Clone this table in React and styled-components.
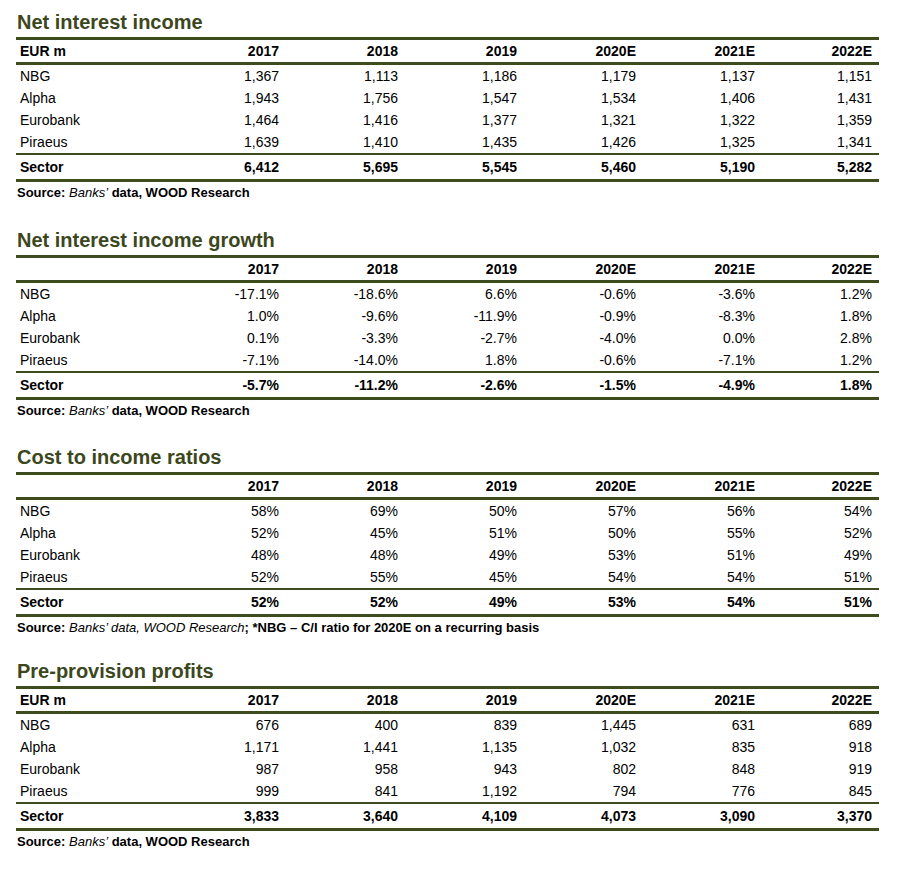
import React from "react";
import styled, { createGlobalStyle } from "styled-components";

const GlobalStyle = createGlobalStyle`
  body {
    margin: 0;
    background: #ffffff;
    font-family: "Liberation Sans", Arial, sans-serif;
    color: #000000;
  }
`;

const Page = styled.div`
  padding: 11px 21px 0 16px;
  width: 900px;
  box-sizing: border-box;
`;

const Section = styled.section`
  margin-top: ${(p) => p.$gap || 0}px;
`;

const Title = styled.h2`
  font-size: 20px;
  line-height: 22px;
  font-weight: 700;
  color: #3c4720;
  margin: 0 0 4px 1px;
`;

const Table = styled.div`
  width: 863px;
  font-size: 14px;
  border-top: 3px solid #3e4b1c;
  border-bottom: 3px solid #3e4b1c;
`;

const Row = styled.div`
  display: grid;
  grid-template-columns: 151px repeat(5, 119px) 117px;
  align-items: center;
  height: ${(p) => p.$h}px;
  font-weight: ${(p) => (p.$bold ? 700 : 400)};
  border-bottom: ${(p) => (p.$head ? "3px solid #3e4b1c" : "none")};
  border-top: ${(p) => (p.$total ? "2px solid #3e4b1c" : "none")};
`;

const Label = styled.div`
  padding-left: 4px;
  white-space: nowrap;
`;

const Cell = styled.div`
  padding-right: 7px;
  text-align: right;
  white-space: nowrap;
`;

const Source = styled.p`
  margin: 3px 0 0 1px;
  font-size: 13px;
  line-height: 16px;
  font-weight: 700;

  em {
    font-weight: 400;
  }
`;

const years = ["2017", "2018", "2019", "2020E", "2021E", "2022E"];

const tables = [
  {
    title: "Net interest income",
    unit: "EUR m",
    gap: 0,
    rows: [
      ["NBG", "1,367", "1,113", "1,186", "1,179", "1,137", "1,151"],
      ["Alpha", "1,943", "1,756", "1,547", "1,534", "1,406", "1,431"],
      ["Eurobank", "1,464", "1,416", "1,377", "1,321", "1,322", "1,359"],
      ["Piraeus", "1,639", "1,410", "1,435", "1,426", "1,325", "1,341"],
    ],
    total: ["Sector", "6,412", "5,695", "5,545", "5,460", "5,190", "5,282"],
  },
  {
    title: "Net interest income growth",
    unit: "",
    gap: 28,
    rows: [
      ["NBG", "-17.1%", "-18.6%", "6.6%", "-0.6%", "-3.6%", "1.2%"],
      ["Alpha", "1.0%", "-9.6%", "-11.9%", "-0.9%", "-8.3%", "1.8%"],
      ["Eurobank", "0.1%", "-3.3%", "-2.7%", "-4.0%", "0.0%", "2.8%"],
      ["Piraeus", "-7.1%", "-14.0%", "1.8%", "-0.6%", "-7.1%", "1.2%"],
    ],
    total: ["Sector", "-5.7%", "-11.2%", "-2.6%", "-1.5%", "-4.9%", "1.8%"],
  },
  {
    title: "Cost to income ratios",
    unit: "",
    gap: 27,
    note: true,
    rows: [
      ["NBG", "58%", "69%", "50%", "57%", "56%", "54%"],
      ["Alpha", "52%", "45%", "51%", "50%", "55%", "52%"],
      ["Eurobank", "48%", "48%", "49%", "53%", "51%", "49%"],
      ["Piraeus", "52%", "55%", "45%", "54%", "54%", "51%"],
    ],
    total: ["Sector", "52%", "52%", "49%", "53%", "54%", "51%"],
  },
  {
    title: "Pre-provision profits",
    unit: "EUR m",
    gap: 24,
    rows: [
      ["NBG", "676", "400", "839", "1,445", "631", "689"],
      ["Alpha", "1,171", "1,441", "1,135", "1,032", "835", "918"],
      ["Eurobank", "987", "958", "943", "802", "848", "919"],
      ["Piraeus", "999", "841", "1,192", "794", "776", "845"],
    ],
    total: ["Sector", "3,833", "3,640", "4,109", "4,073", "3,090", "3,370"],
  },
];

const DataTable = ({ title, unit, rows, total, gap, note }) => (
  <Section $gap={gap}>
    <Title>{title}</Title>
    <Table>
      <Row $head $bold $h={22}>
        <Label>{unit}</Label>
        {years.map((y) => (
          <Cell key={y}>{y}</Cell>
        ))}
      </Row>
      {rows.map((r) => (
        <Row key={r[0]} $h={22}>
          <Label>{r[0]}</Label>
          {r.slice(1).map((v, i) => (
            <Cell key={i}>{v}</Cell>
          ))}
        </Row>
      ))}
      <Row $total $bold $h={24}>
        <Label>{total[0]}</Label>
        {total.slice(1).map((v, i) => (
          <Cell key={i}>{v}</Cell>
        ))}
      </Row>
    </Table>
    {note ? (
      <Source>
        Source: <em>Banks’ data, WOOD Research</em>; *NBG – C/I ratio for 2020E
        on a recurring basis
      </Source>
    ) : (
      <Source>
        Source: <em>Banks’</em> data, WOOD Research
      </Source>
    )}
  </Section>
);

const App = () => (
  <Page>
    <GlobalStyle />
    {tables.map((t) => (
      <DataTable key={t.title} {...t} />
    ))}
  </Page>
);

export default App;
